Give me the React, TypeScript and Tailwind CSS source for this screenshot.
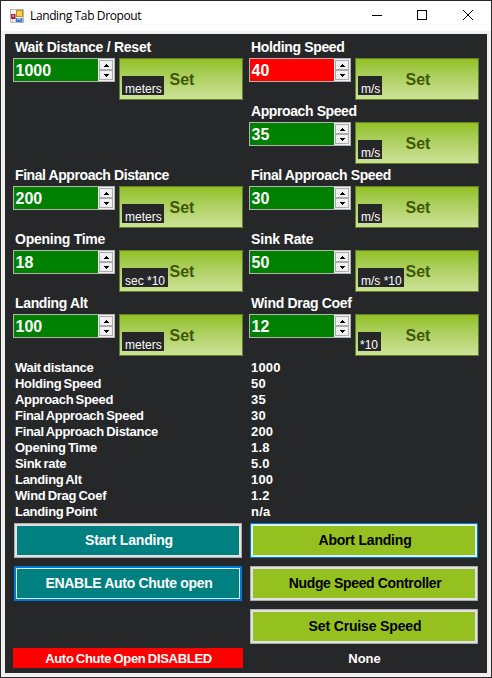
import React from "react";

type Field = {
  label: string;
  value: string;
  unit: string;
  badge: string;
  spacing: string;
  alert?: boolean;
};

const rows: [Field | null, Field][] = [
  [
    { label: "Wait Distance / Reset", value: "1000", unit: "meters", badge: "w-[42px] pl-[3px]", spacing: "tracking-[-0.25px]" },
    { label: "Holding Speed", value: "40", unit: "m/s", badge: "w-6 pl-[3px]", spacing: "tracking-[-0.35px]", alert: true },
  ],
  [null, { label: "Approach Speed", value: "35", unit: "m/s", badge: "w-6 pl-[3px]", spacing: "tracking-[-0.4px]" }],
  [
    { label: "Final Approach Distance", value: "200", unit: "meters", badge: "w-[42px] pl-[3px]", spacing: "tracking-[-0.42px]" },
    { label: "Final Approach Speed", value: "30", unit: "m/s", badge: "w-6 pl-[3px]", spacing: "tracking-[-0.37px]" },
  ],
  [
    { label: "Opening Time", value: "18", unit: "sec *10", badge: "w-[46px] pl-[3px]", spacing: "tracking-[-0.25px]" },
    { label: "Sink Rate", value: "50", unit: "m/s *10", badge: "w-[46px] pl-[3px]", spacing: "tracking-[-0.15px]" },
  ],
  [
    { label: "Landing Alt", value: "100", unit: "meters", badge: "w-[42px] pl-[3px]", spacing: "tracking-[-0.35px]" },
    { label: "Wind Drag Coef", value: "12", unit: "*10", badge: "w-[23px] pl-[2px]", spacing: "tracking-[-0.3px]" },
  ],
];

const readings: [string, string][] = [
  ["Wait distance", "1000"],
  ["Holding Speed", "50"],
  ["Approach Speed", "35"],
  ["Final Approach Speed", "30"],
  ["Final Approach Distance", "200"],
  ["Opening Time", "1.8"],
  ["Sink rate", "5.0"],
  ["Landing Alt", "100"],
  ["Wind Drag Coef", "1.2"],
  ["Landing Point", "n/a"],
];

function SpinArrow({ up }: { up: boolean }) {
  return (
    <div className="flex h-[10px] w-[14px] items-center justify-center border border-[#acacac] bg-[#f0f0f0]">
      <svg width="5" height="3" viewBox="0 0 5 3" shapeRendering="crispEdges">
        <path d={up ? "M2 0h1v1h1v1h1v1H0V2h1V1h1z" : "M0 0h5v1H4v1H3v1H2V2H1V1H0z"} fill="#000" />
      </svg>
    </div>
  );
}

function FieldCell({ field }: { field: Field | null }) {
  if (!field) return <div className="h-16 w-[236px]" />;
  return (
    <div className="h-16 w-[236px]">
      <div className={"h-[19px] whitespace-nowrap pl-[2px] text-[14px] leading-[19px] " + field.spacing}>
        {field.label}
      </div>
      <div className="mt-px flex gap-1">
        <div
          className={
            "flex h-6 w-[102px] justify-between border border-[#b4b4b4] " +
            (field.alert ? "bg-[#ff0000]" : "bg-[#008000]")
          }
        >
          <span className="pl-[1.5px] text-[16px] leading-[23px]">{field.value}</span>
          <span className="flex h-[22px] w-4 flex-col items-center bg-[#f0f0f0] pt-px">
            <SpinArrow up />
            <SpinArrow up={false} />
          </span>
        </div>
        <div className="relative flex h-[42px] w-[124px] items-center justify-center border border-[#62832c] bg-linear-to-b from-[#94c11f] to-[#cde296] text-[16px] text-[#405704]">
          <span className="pl-[2px] pt-px">Set</span>
          <span
            className={
              "absolute bottom-[4px] left-[2px] h-[19px] whitespace-nowrap bg-[#262728] text-[12px] font-normal leading-[26px] text-white " +
              field.badge
            }
          >
            {field.unit}
          </span>
        </div>
      </div>
    </div>
  );
}

function WindowBar() {
  return (
    <div className="flex h-[30px] items-center bg-white">
      <svg className="ml-[9px]" width="14" height="14" viewBox="0 0 14 14">
        <rect x="0.5" y="0.5" width="13" height="13" fill="#f4f4f4" stroke="#b9b9b9" />
        <path d="M0 9.5h6M5.500 9v5M2.500 10v4" stroke="#c8c8c8" />
        <rect x="6.500" y="1.500" width="6" height="6" fill="#f9cf4c" stroke="#c18d17" />
        <rect x="1" y="5" width="4.500" height="5" fill="#a52a35" />
        <rect x="2" y="6" width="2" height="2" fill="#dd7f84" />
        <rect x="6" y="9" width="6.500" height="4" fill="#3e78d0" />
        <rect x="7" y="9" width="4" height="2" fill="#83b3ee" />
      </svg>
      <span className="ml-[6px] whitespace-nowrap font-['Open_Sans','Noto_Sans',sans-serif] text-[12px] leading-[18px] tracking-[-0.38px] text-black">
        Landing Tab Dropout
      </span>
      <svg className="ml-auto mr-4" width="104" height="12" viewBox="0 0 104 12">
        <path d="M1 5.500h10" stroke="#000" />
        <rect x="46.500" y="0.500" width="9" height="9" fill="none" stroke="#000" />
        <path d="M92 0l10 10M102 0L92 10" stroke="#000" />
      </svg>
    </div>
  );
}

function ActionButton({ children, look }: { children: React.ReactNode; look: string }) {
  return (
    <button
      className={
        "flex h-[35px] w-[228px] items-center justify-center whitespace-nowrap border pl-[2px] text-[14px] font-bold " +
        look
      }
    >
      {children}
    </button>
  );
}

const plainTeal = "border-[#adadad] bg-[#008080] text-white inset-ring-2 inset-ring-[#e1e1e1]";
const focusTeal =
  "border-[#0078d7] bg-[#008080] text-white shadow-[inset_0_0_0_1px_#0078d7,inset_0_0_0_2px_#d9efef]";
const plainGreen = "border-[#adadad] bg-[#94c11f] text-black inset-ring-2 inset-ring-[#e1e1e1]";
const hotGreen = "border-[#0078d7] bg-[#94c11f] text-black inset-ring-2 inset-ring-[#d9f5ee]";

export default function App() {
  return (
    <div className="h-[678px] w-[492px] bg-[#2b2829] p-px font-['Liberation_Sans',Arial,sans-serif]">
      <div className="flex h-[676px] w-[490px] flex-col bg-[#f0f0f0]">
        <WindowBar />
        <main className="ml-1 mt-[3px] h-[639px] w-[482px] bg-[#262728] pl-2 pt-1 font-bold text-white">
          {rows.map((pair, i) => (
            <div key={i} className="flex">
              <FieldCell field={pair[0]} />
              <FieldCell field={pair[1]} />
            </div>
          ))}
          <div className="pl-[2px] pt-[2px] text-[13px] leading-4">
            {readings.map(([name, value]) => (
              <div key={name} className="flex h-4">
                <span className="w-[236px] whitespace-nowrap tracking-[-0.3px] [word-spacing:-1px]">{name}</span>
                <span className="tracking-[0.2px]">{value}</span>
              </div>
            ))}
          </div>
          <div className="ml-px mt-[3px] grid grid-cols-[228px_228px] gap-x-2 gap-y-2">
            <ActionButton look={plainTeal + " tracking-[-0.17px]"}>Start Landing</ActionButton>
            <ActionButton look={hotGreen + " tracking-[-0.2px]"}>Abort Landing</ActionButton>
            <ActionButton look={focusTeal + " tracking-[-0.3px]"}>ENABLE Auto Chute open</ActionButton>
            <ActionButton look={plainGreen + " tracking-[-0.35px]"}>Nudge Speed Controller</ActionButton>
            <span />
            <ActionButton look={plainGreen + " tracking-[-0.15px]"}>Set Cruise Speed</ActionButton>
          </div>
          <div className="mt-1 flex gap-[6px] text-center text-[13px] leading-[22px]">
            <div className="h-5 w-[230px] bg-[#ff0000] pl-px tracking-[-0.3px] [word-spacing:-1px]">
              Auto Chute Open DISABLED
            </div>
            <div className="h-5 w-[230px] pl-px">None</div>
          </div>
        </main>
      </div>
    </div>
  );
}
